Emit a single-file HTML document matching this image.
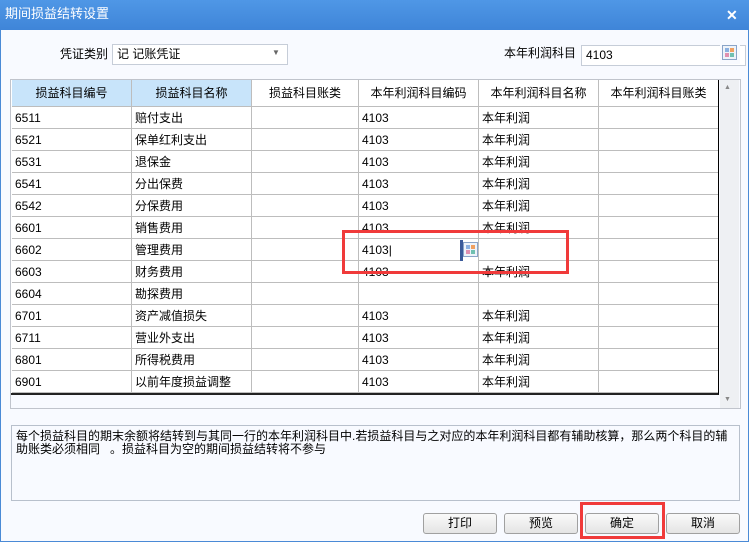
<!DOCTYPE html><html><head><meta charset="utf-8"><style>
*{margin:0;padding:0;box-sizing:border-box}
body{width:749px;height:542px;overflow:hidden;background:#fff;font-family:"Liberation Sans","Noto Sans CJK SC",sans-serif;font-size:12px;color:#000;position:relative}
.a{position:absolute}
#win{left:0;top:0;width:749px;height:542px;background:#f8faff;border:1px solid #4a8ad6}
#title{left:0;top:0;width:749px;height:30px;background:linear-gradient(#4f97e6,#3f85d8);color:#fff;font-size:13px;line-height:28px;padding-left:5px}
.in{background:#fff;border:1px solid #c6cdd8;height:21px;line-height:19px;padding-left:4px}
.row{position:absolute;left:12px;width:706px;height:22px;border-bottom:1px solid #bdbdbd}
.c{position:absolute;top:0;height:22px;line-height:23px;padding-left:3px;border-right:1px solid #bdbdbd;white-space:nowrap;overflow:hidden}
.h .c{height:26px;line-height:26px;text-align:center;padding:0}
.btn{position:absolute;top:513px;width:74px;height:21px;border:1px solid #a0a0a0;border-radius:3px;background:linear-gradient(#fafafa,#e4e4e4);text-align:center;line-height:19px}
.red{position:absolute;border:3px solid #f03a3a}
.ico{width:15px;height:15px;border:1px solid #8aa4c8;background:#eef3fa}
.ico i{position:absolute;width:4px;height:4px}
</style></head><body>
<div id="win" class="a"></div>
<div id="title" class="a">期间损益结转设置</div>
<div class="a" style="left:726px;top:7px;color:#fff;font-weight:bold;font-size:14px">✕</div>
<div class="a" style="left:60px;top:45px">凭证类别</div>
<div class="a in" style="left:112px;top:44px;width:176px">记 记账凭证</div>
<div class="a" style="left:272px;top:48px;color:#666;font-size:8px">▼</div>
<div class="a" style="left:504px;top:44px">本年利润科目</div>
<div class="a in" style="left:581px;top:45px;width:165px">4103</div>
<div class="a" style="left:720px;top:44px;width:20px;height:20px;background:#f8faff"></div>
<div class="a ico" style="left:722px;top:45px"><i style="left:2px;top:2px;background:#8ab0e0"></i><i style="left:7px;top:2px;background:#f0a060"></i><i style="left:2px;top:7px;background:#e090b0"></i><i style="left:7px;top:7px;background:#70c0b0"></i></div>
<div class="a" style="left:10px;top:79px;width:731px;height:330px;border:1px solid #c0c4cc;background:#f8faff"></div>
<div class="a" style="left:11px;top:80px;width:708px;height:315px;background:#fff;border-right:1px solid #000;border-bottom:2px solid #222"></div>
<div class="a" style="left:720px;top:80px;width:19px;height:328px;background:#eef0f3"></div>
<div class="a" style="left:724px;top:84px;font-size:7px;color:#888">▲</div>
<div class="a" style="left:724px;top:396px;font-size:7px;color:#888">▼</div>
<div class="row h" style="top:80px;height:27px">
<div class="c" style="left:0;width:120px;background:#c8e4fa">损益科目编号</div>
<div class="c" style="left:120px;width:120px;background:#c8e4fa">损益科目名称</div>
<div class="c" style="left:240px;width:107px">损益科目账类</div>
<div class="c" style="left:347px;width:120px">本年利润科目编码</div>
<div class="c" style="left:467px;width:120px">本年利润科目名称</div>
<div class="c" style="left:587px;width:119px;border-right:none">本年利润科目账类</div>
</div>
<div id="rows"></div>
<script>
var d=[["6511","赔付支出",1],["6521","保单红利支出",1],["6531","退保金",1],["6541","分出保费",1],["6542","分保费用",1],["6601","销售费用",1],["6602","管理费用",2],["6603","财务费用",1],["6604","勘探费用",0],["6701","资产减值损失",1],["6711","营业外支出",1],["6801","所得税费用",1],["6901","以前年度损益调整",1]];
var h="";d.forEach(function(r,i){var t=107+i*22;h+='<div class="row" style="top:'+t+'px"><div class="c" style="left:0;width:120px">'+r[0]+'</div><div class="c" style="left:120px;width:120px">'+r[1]+'</div><div class="c" style="left:240px;width:107px"></div><div class="c" style="left:347px;width:120px">'+(r[2]==1?'4103':r[2]==2?'4103|':'')+'</div><div class="c" style="left:467px;width:120px">'+(r[2]==1?'本年利润':'')+'</div><div class="c" style="left:587px;width:119px;border-right:none"></div></div>'});
document.getElementById("rows").innerHTML=h;
</script>
<div class="a" style="left:460px;top:240px;width:18px;height:21px;background:#fff;border-left:3px solid #3a5a9a"></div>
<div class="a ico" style="left:463px;top:242px"><i style="left:2px;top:2px;background:#8ab0e0"></i><i style="left:7px;top:2px;background:#f0a060"></i><i style="left:2px;top:7px;background:#e090b0"></i><i style="left:7px;top:7px;background:#70c0b0"></i></div>
<div class="red" style="left:342px;top:230px;width:227px;height:44px"></div>
<div class="a" style="left:11px;top:425px;width:729px;height:76px;border:1px solid #b8c0cc;background:#f8faff;padding:4px 4px;line-height:13px">每个损益科目的期末余额将结转到与其同一行的本年利润科目中.若损益科目与之对应的本年利润科目都有辅助核算，那么两个科目的辅助账类必须相同&nbsp;&nbsp;&nbsp;。损益科目为空的期间损益结转将不参与</div>
<div class="btn" style="left:423px">打印</div>
<div class="btn" style="left:504px">预览</div>
<div class="btn" style="left:585px">确定</div>
<div class="btn" style="left:666px">取消</div>
<div class="red" style="left:580px;top:502px;width:85px;height:37px"></div>
</body></html>
